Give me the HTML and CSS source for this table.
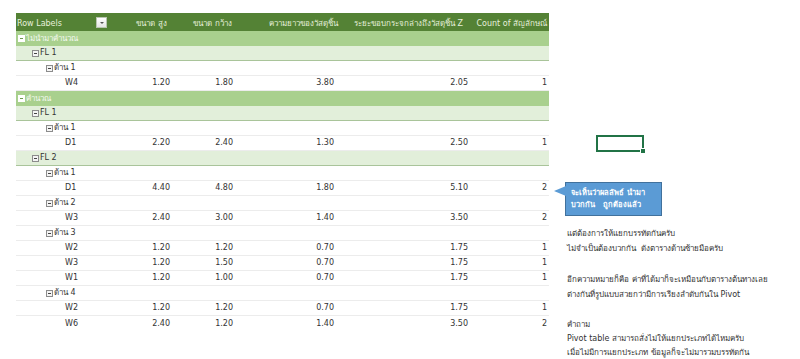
FILE: index.html
```html
<!DOCTYPE html>
<html lang="th">
<head>
<meta charset="utf-8">
<title>Pivot</title>
<link rel="stylesheet" href="styles.css">
</head>
<body>
<div class="sheet">
  <div class="pivot">
    <div class="row head">
      <div class="c lbl">Row Labels<span class="dd"></span></div>
      <div class="c num h2">ขนาด สูง</div>
      <div class="c num h3">ขนาด กว้าง</div>
      <div class="c num h4">ความยาวของวัสดุชิ้น</div>
      <div class="c num h5">ระยะขอบกระจกล่างถึงวัสดุชิ้น Z</div>
      <div class="c num h6">Count of สัญลักษณ์</div>
    </div>
    <div class="row l0"><div class="c span"><span class="tog"></span> ไม่นำมาคำนวณ</div></div>
    <div class="row l1"><div class="c span"><span class="tog"></span>FL 1</div></div>
    <div class="row l2"><div class="c span"><span class="tog"></span>ด้าน 1</div></div>
    <div class="row leaf"><div class="c lbl">W4</div><div class="c num">1.20</div><div class="c num">1.80</div><div class="c num">3.80</div><div class="c num">2.05</div><div class="c num">1</div></div>
    <div class="row l0"><div class="c span"><span class="tog"></span> คำนวณ</div></div>
    <div class="row l1"><div class="c span"><span class="tog"></span>FL 1</div></div>
    <div class="row l2"><div class="c span"><span class="tog"></span>ด้าน 1</div></div>
    <div class="row leaf"><div class="c lbl">D1</div><div class="c num">2.20</div><div class="c num">2.40</div><div class="c num">1.30</div><div class="c num">2.50</div><div class="c num">1</div></div>
    <div class="row l1"><div class="c span"><span class="tog"></span>FL 2</div></div>
    <div class="row l2"><div class="c span"><span class="tog"></span>ด้าน 1</div></div>
    <div class="row leaf"><div class="c lbl">D1</div><div class="c num">4.40</div><div class="c num">4.80</div><div class="c num">1.80</div><div class="c num">5.10</div><div class="c num">2</div></div>
    <div class="row l2"><div class="c span"><span class="tog"></span>ด้าน 2</div></div>
    <div class="row leaf"><div class="c lbl">W3</div><div class="c num">2.40</div><div class="c num">3.00</div><div class="c num">1.40</div><div class="c num">3.50</div><div class="c num">2</div></div>
    <div class="row l2"><div class="c span"><span class="tog"></span>ด้าน 3</div></div>
    <div class="row leaf"><div class="c lbl">W2</div><div class="c num">1.20</div><div class="c num">1.20</div><div class="c num">0.70</div><div class="c num">1.75</div><div class="c num">1</div></div>
    <div class="row leaf"><div class="c lbl">W3</div><div class="c num">1.20</div><div class="c num">1.50</div><div class="c num">0.70</div><div class="c num">1.75</div><div class="c num">1</div></div>
    <div class="row leaf"><div class="c lbl">W1</div><div class="c num">1.20</div><div class="c num">1.00</div><div class="c num">0.70</div><div class="c num">1.75</div><div class="c num">1</div></div>
    <div class="row l2"><div class="c span"><span class="tog"></span>ด้าน 4</div></div>
    <div class="row leaf"><div class="c lbl">W2</div><div class="c num">1.20</div><div class="c num">1.20</div><div class="c num">0.70</div><div class="c num">1.75</div><div class="c num">1</div></div>
    <div class="row leaf last"><div class="c lbl">W6</div><div class="c num">2.40</div><div class="c num">1.20</div><div class="c num">1.40</div><div class="c num">3.50</div><div class="c num">2</div></div>
  </div>
  <div class="notes">
    <p>แต่ต้องการให้แยกบรรทัดกันครับ<br>ไม่จำเป็นต้องบวกกัน&nbsp; ดังตารางด้านซ้ายมือครับ</p>
    <p>อีกความหมายก็คือ ค่าที่ได้มาก็จะเหมือนกับตารางต้นทางเลย<br>ต่างกันที่รูปแบบสวยกว่ามีการเรียงลำดับกันใน Pivot</p>
    <p class="q">คำถาม<br>Pivot table สามารถสั่งไม่ให้แยกประเภทได้ไหมครับ<br>เมื่อไม่มีการแยกประเภท ข้อมูลก็จะไม่มารวมบรรทัดกัน</p>
  </div>
  <div class="selcell"></div>
  <div class="callout">จะเห็นว่าผลลัพธ์ นำมา<br>บวกกัน &nbsp; ถูกต้องแล้ว</div>
</div>
</body>
</html>
```
FILE: styles.css
```css
html, body {
  margin: 0;
  padding: 0;
  background: #ffffff;
}
.sheet {
  position: relative;
  width: 800px;
  height: 359px;
  overflow: hidden;
  display: flex;
  align-items: flex-start;
  font-family: "DejaVu Sans", "Noto Sans", sans-serif;
  font-size: 8px;
  color: #333;
}
.pivot {
  margin: 13px 0 0 16px;
  width: 533px;
  display: flex;
  flex-direction: column;
}
.row {
  display: grid;
  grid-template-columns: 94px 62px 63px 101px 134px 79px;
  height: 15px;
  box-sizing: border-box;
  border-bottom: 1px solid #ececec;
  align-items: center;
}
.c {
  white-space: nowrap;
  line-height: 14px;
}
.num {
  text-align: right;
  padding-right: 2px;
}
.span {
  grid-column: 1 / -1;
  display: flex;
  align-items: center;
}
.head {
  height: 18px;
  background: #548235;
  color: #e6f0dc;
  border-bottom: none;
  align-items: end;
}
.head .c { line-height: 13px; padding-bottom: 1px; }
.head .lbl { position: relative; padding-left: 1px; }
.head .h2 { padding-right: 5px; }
.head .h3 { padding-right: 3px; }
.head .h4 { padding-right: 0; margin-right: -2px; }
.head .h5 { padding-right: 7px; }
.head .h6 { padding-right: 2px; }
.dd {
  position: absolute;
  left: 80px;
  bottom: 3px;
  width: 11px;
  height: 11px;
  box-sizing: border-box;
  border: 1px solid #b9c6b0;
  background: linear-gradient(#ffffff, #e6e6e6);
}
.dd::after {
  content: "";
  position: absolute;
  left: 3px;
  top: 4px;
  border-left: 2px solid transparent;
  border-right: 2px solid transparent;
  border-top: 2px solid #555;
}
.l0 {
  background: #a9d08e;
  color: #f4f9f0;
  border-bottom: none;
}
.l0 .span { padding-left: 2px; }
.l1 {
  background: #e2efda;
  border-bottom: 1px solid #a9c49a;
}
.l1 .span { padding-left: 16px; }
.l2 .span { padding-left: 30px; }
.leaf .lbl { padding-left: 49px; }
.leaf.last { border-bottom: none; }
.tog {
  position: relative;
  display: inline-block;
  width: 7px;
  height: 7px;
  box-sizing: border-box;
  border: 1px solid #8c8c8c;
  background: #f4f4f4;
  margin-right: 1px;
}
.tog::after {
  content: "";
  position: absolute;
  left: 1px;
  top: 2px;
  width: 3px;
  height: 1px;
  background: #444;
}
.l0 .tog { border-color: #ffffff; background: #ffffff; }
.l0 .tog::after { background: #6c9a4f; }
.notes {
  margin: 226px 0 0 18px;
  color: #333;
  font-size: 8px;
  line-height: 15px;
}
.notes p { margin: 0 0 16px 0; }
.notes .q { line-height: 14px; }
.selcell {
  position: absolute;
  left: 596px;
  top: 135px;
  width: 48px;
  height: 17px;
  box-sizing: border-box;
  border: 2px solid #217346;
}
.selcell::after {
  content: "";
  position: absolute;
  right: -4px;
  bottom: -4px;
  width: 4px;
  height: 4px;
  background: #217346;
  border: 1px solid #fff;
}
.callout {
  position: absolute;
  left: 565px;
  top: 182px;
  width: 97px;
  height: 34px;
  box-sizing: border-box;
  padding: 4px 0 0 5px;
  background: #5b9bd5;
  border: 1px solid #41719c;
  color: #ffffff;
  font-size: 7.5px;
  font-weight: bold;
  line-height: 12px;
}
.callout::before {
  content: "";
  position: absolute;
  left: -12px;
  top: 3px;
  border-top: 5px solid transparent;
  border-bottom: 5px solid transparent;
  border-right: 12px solid #5b9bd5;
}
```
